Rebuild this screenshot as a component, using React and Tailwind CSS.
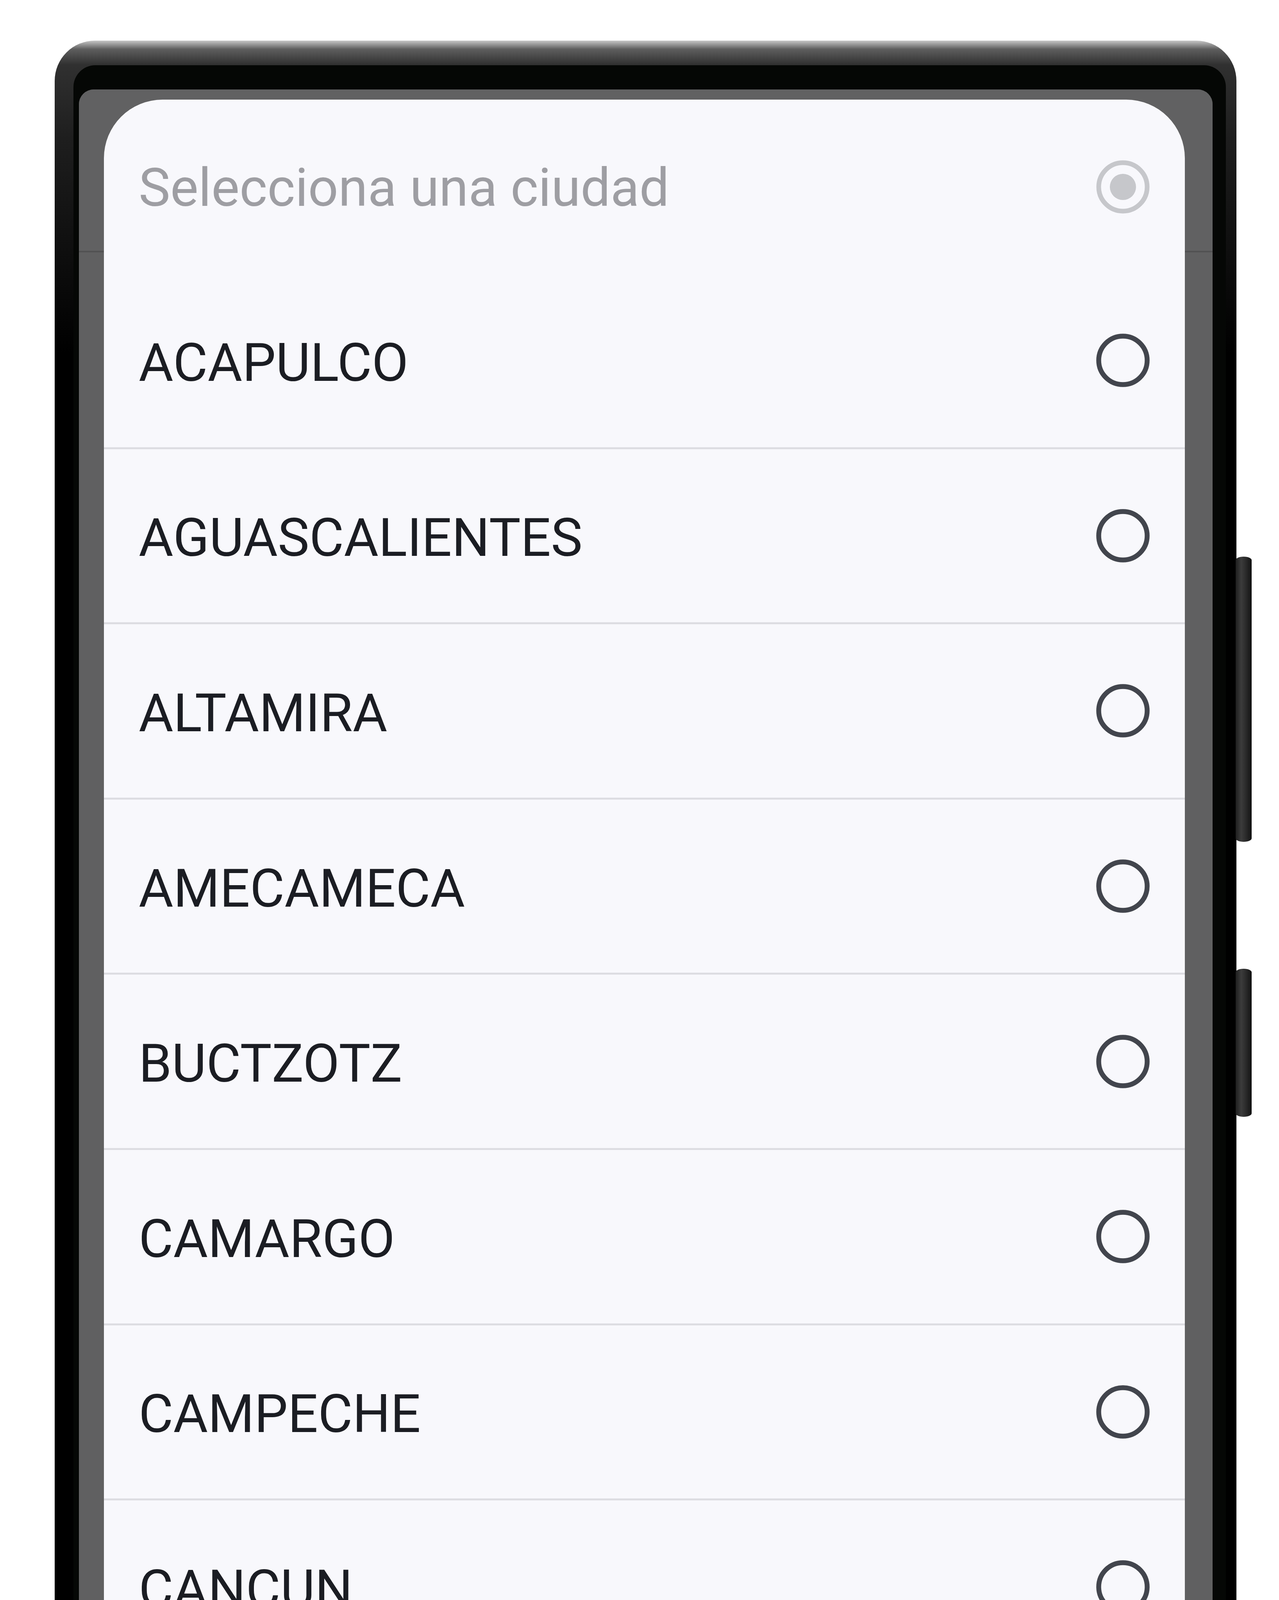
import React from "react";

const CITIES = [
  "ACAPULCO",
  "AGUASCALIENTES",
  "ALTAMIRA",
  "AMECAMECA",
  "BUCTZOTZ",
  "CAMARGO",
  "CAMPECHE",
  "CANCUN",
  "CD. DE MEXICO",
  "CELAYA",
  "CHALCO",
  "CHEMAX",
  "CHETUMAL",
];

function RadioEmpty() {
  return (
    <svg width="137" height="137" viewBox="0 0 137 137" className="shrink-0">
      <circle cx="68.5" cy="68.5" r="62" fill="none" stroke="#42454d" strokeWidth="12.5" />
    </svg>
  );
}

function RadioDisabledChecked() {
  return (
    <svg width="137" height="137" viewBox="0 0 137 137" className="shrink-0">
      <circle cx="68.5" cy="68.5" r="62" fill="none" stroke="#c6c7cb" strokeWidth="12" />
      <circle cx="68.5" cy="68.5" r="33.5" fill="#c6c7cb" />
    </svg>
  );
}

export default function App() {
  return (
    <div
      className="w-[3274px] h-[6533px] bg-white pl-[140px] pt-[104px]"
      style={{ fontFamily: "Roboto, 'Noto Sans', 'Liberation Sans', sans-serif" }}
    >
      {/* phone outer frame */}
      <div className="relative w-[3025px] h-[6344px] rounded-[103px] bg-[linear-gradient(to_bottom,#c6c6c6_0px,#5e5e5e_22px,#303030_62px,#1e1e1e_250px,#000_800px,#000_6270px,#0c0c0c_6290px,#c8c8c8_6344px)] pl-[48px] pt-[63px]">
        {/* side buttons */}
        <div className="absolute left-[3023px] top-[1321px] w-[41px] h-[730px] rounded-[20px/9px] bg-[linear-gradient(to_right,#1e1e1e,#3c3c3c_35%,#2a2a2a_65%,#111)]" />
        <div className="absolute left-[3023px] top-[2376px] w-[41px] h-[379px] rounded-[20px/9px] bg-[linear-gradient(to_right,#1e1e1e,#3c3c3c_35%,#2a2a2a_65%,#111)]" />

        {/* inner bezel */}
        <div className="w-[2950px] h-[6205px] rounded-[56px] bg-[#050705] pl-[14px] pt-[62px]">
          {/* screen */}
          <div className="relative w-[2902px] h-[6091px] rounded-[38px] overflow-hidden bg-[#606061] flex flex-col">
            {/* dimmed underlying app */}
            <div className="h-[417px] border-b-[4px] border-[#525253] bg-[#616162]" />
            <div className="flex-1" />
            <div className="h-[373px] bg-[#141519]" />

            {/* bottom sheet */}
            <div className="absolute left-[64px] top-[26px] w-[2767px] h-[6108px] rounded-[150px] bg-[#f8f8fc] overflow-hidden flex flex-col">
              <div className="h-[446px] shrink-0 flex items-center justify-between pl-[89px] pr-[90px]">
                <span className="text-[136px] leading-none text-[#9e9ea3] pt-[6px]">Selecciona una ciudad</span>
                <RadioDisabledChecked />
              </div>
              {CITIES.map((c) => (
                <div
                  key={c}
                  className="h-[448.6px] shrink-0 flex items-center justify-between pl-[89px] pr-[90px] border-b-[5px] border-[#dddde2]"
                >
                  <span className="text-[136px] leading-none text-[#1b1d23] pt-[12px]">{c}</span>
                  <RadioEmpty />
                </div>
              ))}
            </div>
          </div>
        </div>
      </div>
    </div>
  );
}
